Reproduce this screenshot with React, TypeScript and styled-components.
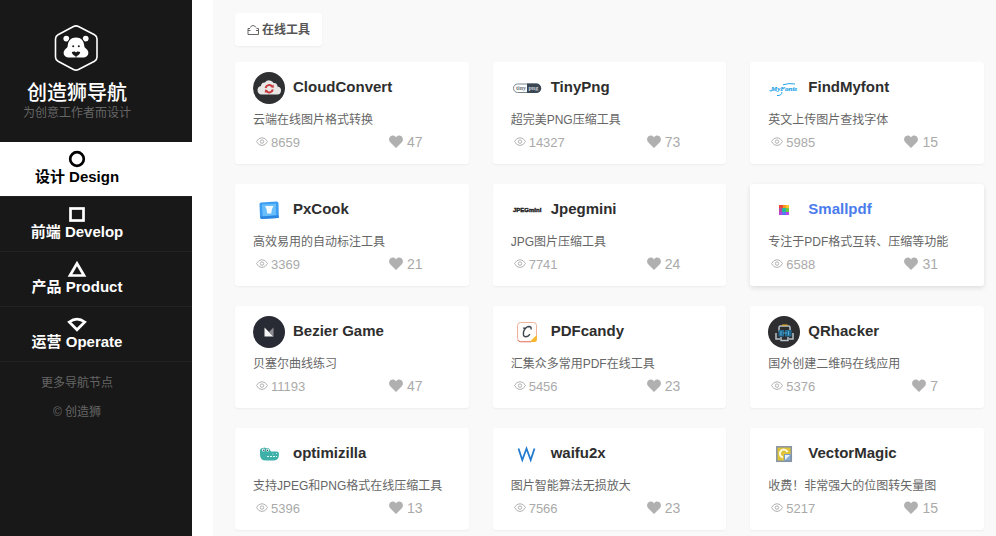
import React from "react";
import styled, { createGlobalStyle, css } from "styled-components";

const GlobalStyle = createGlobalStyle`
  * { box-sizing: border-box; }
  body {
    margin: 0;
    background: #fff;
    font-family: "Liberation Sans", Arial, "Noto Sans CJK SC", sans-serif;
    font-size: 12px;
    color: #666;
  }
  a { color: inherit; text-decoration: none; }
  svg { display: block; flex: none; }
`;

const Page = styled.div`
  display: flex;
  gap: 21px;
  min-height: 100vh;
`;

const Sidebar = styled.aside`
  flex: none;
  width: 192px;
  background: #181818;
  color: #fff;
`;

const Brand = styled.header`
  display: flex;
  flex-direction: column;
  align-items: center;
  height: 142px;
  padding: 24px 38px 0 0;
`;

const BrandName = styled.h1`
  margin: 9px 0 0;
  font-size: 20px;
  line-height: 24px;
  font-weight: 500;
  white-space: nowrap;
`;

const Slogan = styled.p`
  margin: 0;
  line-height: 16px;
  color: #666;
  white-space: nowrap;
`;

const NavLink = styled.a<{ $active?: boolean }>`
  display: flex;
  flex-direction: column;
  align-items: center;
  height: 55px;
  padding: 8px 38px 0 0;
  border-bottom: 1px solid #222;
  font-size: 15px;
  font-weight: 700;
  line-height: 18px;
  white-space: nowrap;
  ${({ $active }) => $active && css`
    background: #fff;
    color: #000;
  `}
`;

const SideLinks = styled.div`
  display: flex;
  flex-direction: column;
  align-items: center;
  gap: 9px;
  padding: 11px 38px 0 0;
  line-height: 20px;
  color: #666;
`;

const Main = styled.main`
  flex: 1;
  min-width: 0;
  padding: 13px 12px 6px 22px;
  background: #f9f9f9;
`;

const SectionTag = styled.h2`
  display: inline-flex;
  align-items: center;
  gap: 3px;
  height: 33px;
  margin: 0 0 16px;
  padding: 0 12px;
  border-radius: 3px;
  background: #fff;
  box-shadow: 0 1px 2px rgba(0, 0, 0, 0.05);
  font-size: 12px;
  line-height: 20px;
  color: #555;
`;

const Grid = styled.div`
  display: grid;
  grid-template-columns: repeat(3, minmax(0, 1fr));
  gap: 20px 24px;
`;

const Title = styled.a<{ $highlight?: boolean }>`
  display: flex;
  align-items: center;
  gap: 8px;
  height: 32px;
  font-size: 15px;
  font-weight: 700;
  line-height: 18px;
  white-space: nowrap;
  color: ${({ $highlight }) => ($highlight ? "#4a7cec" : "#2e2e2e")};
`;

const TitleText = styled.span`
  padding-bottom: 2px;
`;

const Card = styled.article<{ $raised?: boolean }>`
  padding: 10px 18px 12px;
  border-radius: 3px;
  background: #fff;
  box-shadow: ${({ $raised }) =>
    $raised ? "0 2px 5px rgba(0, 0, 0, 0.11)" : "0 1px 2px rgba(0, 0, 0, 0.05)"};
`;

const Description = styled.p`
  margin: 6px 0 2px;
  line-height: 20px;
  white-space: nowrap;
  overflow: hidden;
  text-overflow: ellipsis;
`;

const Stats = styled.div`
  display: flex;
  justify-content: space-between;
  height: 20px;
  padding: 0 28px 0 3px;
  color: #aaa;
`;

const Views = styled.span`
  display: flex;
  align-items: center;
  gap: 3px;
  font-size: 13px;
`;

const LikeButton = styled.button`
  display: flex;
  align-items: center;
  gap: 4px;
  padding: 0;
  border: 0;
  background: none;
  font: inherit;
  font-size: 14px;
  line-height: 20px;
  color: #aaa;
  cursor: pointer;
`;

const BearLogo = () => (
  <svg width="46" height="48" viewBox="0 0 46 48" aria-hidden="true">
    <path d="M19.500 2.500Q22 1.200 24.500 2.500L40.500 10.800Q43 12.200 43 15V33Q43 35.800 40.500 37.200L24.500 45.500Q22 46.800 19.500 45.500L4 37.200Q1.500 35.800 1.500 33V15Q1.500 12.200 4 10.800Z" fill="none" stroke="#fff" strokeWidth="1.600" />
    <circle cx="12.300" cy="14.600" r="2.900" fill="#fff" />
    <circle cx="31.700" cy="14.600" r="2.900" fill="#fff" />
    <path d="M22 13.500c-5 0-8 3.300-8.300 8.500-.2 1.500-1 2-2.200 3-3.500 3-1.800 8.500 3 8.500h15c4.800 0 6.500-5.500 3-8.500-1.200-1-2-1.500-2.200-3-.3-5.200-3.300-8.500-8.300-8.500Z" fill="#fff" stroke="#181818" strokeWidth="2" paintOrder="stroke" />
    <circle cx="19.200" cy="22.300" r="1" fill="#181818" />
    <circle cx="24.800" cy="22.300" r="1" fill="#181818" />
    <path d="M17.800 28q2-.8 3-.5L22 28.600l1.200-1.100q1-.3 3 .5-.5 3.200-3.700 4v1.500h-1V32q-3.200-.8-3.700-4Z" fill="#181818" />
  </svg>
);

const navShapes = {
  circle: <circle cx="10" cy="9" r="6.800" />,
  square: <rect x="3.500" y="3.500" width="13" height="12" />,
  triangle: <path d="M10 3.500 17 15.500H3Z" />,
  fan: <path d="M2.200 7Q10 1.200 17.800 7L10 14.800Z" />,
};

const NavIcon = ({ shape }: { shape: keyof typeof navShapes }) => (
  <svg width="20" height="18" viewBox="0 0 20 18" fill="none" stroke="currentColor" strokeWidth="2.700" aria-hidden="true">
    {navShapes[shape]}
  </svg>
);

const TrayIcon = () => (
  <svg width="12" height="12" viewBox="0 0 12 12" fill="none" stroke="#666" aria-hidden="true">
    <path d="M3 4.500H1V10.500H11.500V4.500H9.500M3.500 3.500Q4 1.500 6 1.500T9 3.500M1 6.500H3.500M9 6.500H11.500" />
  </svg>
);

const EyeIcon = () => (
  <svg width="12" height="10" viewBox="0 0 12 10" fill="none" stroke="#b2b2b2" aria-hidden="true">
    <path d="M.5 4.500Q2.500.7 6 .7T11.500 4.500Q9.500 8.500 6 8.500T.5 4.500Z" />
    <circle cx="6" cy="4.600" r="1.700" />
  </svg>
);

const HeartIcon = () => (
  <svg width="14" height="14" viewBox="0 0 14 14" fill="#b0b0b0" aria-hidden="true">
    <path d="M7 13 1.200 7.300C-.5 5.500-.2 2.500 1.600 1.200 3.500 0 5.800.5 7 2.400 8.200.5 10.500 0 12.400 1.200 14.200 2.500 14.500 5.500 12.800 7.300Z" />
  </svg>
);

const logos: Record<string, React.ReactNode> = {
  CloudConvert: (
    <>
      <circle cx="16" cy="16" r="16" fill="#2f3032" />
      <path d="M8.500 22.500a4.300 4.300 0 0 1-.5-8.500 3.500 3.500 0 0 1 4-3.500 5 5 0 0 1 8.500.5 3.700 3.700 0 0 1 4 3.500 4 4 0 0 1-1 8Z" fill="#e9e7e6" />
      <g fill="none" stroke="#c5383d" strokeWidth="2">
        <path d="M12.600 16a3.700 3.700 0 0 1 6.500-1.600M19.800 17.500a3.700 3.700 0 0 1-6.500 1.600" />
      </g>
      <path d="m20.800 12.500-.2 3.500-3.200-1ZM11.800 21l.2-3.500 3 1Z" fill="#c5383d" />
    </>
  ),
  TinyPng: (
    <>
      <rect x="2.500" y="12" width="27" height="8.500" rx="4.200" fill="#fff" stroke="#7b8791" />
      <path d="M16 11.500h9.500a4.700 4.700 0 0 1 0 9.500H16Z" fill="#3a4754" />
      <text x="5" y="18" fontSize="6" fontFamily="Liberation Serif" fill="#67727d">tiny</text>
      <text x="17.500" y="18" fontSize="6" fontFamily="Liberation Serif" fill="#cbd2d8">png</text>
    </>
  ),
  FindMyfont: (
    <>
      <text x="3" y="19" fontSize="7" fontStyle="italic" fontWeight="700" fontFamily="Liberation Serif" fill="#27a5e8" stroke="#27a5e8" strokeWidth=".2">MyFonts</text>
      <path d="M1.500 18.500q1.500 1.500 3-.5M14 20q-.5 4-5 3.500M15 12.800q6-2 12-.8" fill="none" stroke="#27a5e8" />
    </>
  ),
  PxCook: (
    <>
      <path d="M8 8.500 23.500 7.500Q25.500 7.500 25.500 9.500L25.800 22.500Q26 24 24.300 24L9 25Q7 25 7 23L6.500 10Q6.500 8.600 8 8.500Z" fill="#3c9df2" />
      <path d="M9 10.500 23 9.800V21L9.500 22.500Z" fill="#68bdfb" />
      <path d="M12 12h8.500l-1.500 3-.8 4.500h-4l-.7-4.500Z" fill="#f3faff" />
      <path d="M7 22.500 25.700 21.500V24L8 25Z" fill="#2c85df" />
    </>
  ),
  Jpegmini: (
    <text x="2" y="18" fontSize="6" fontWeight="700" fontFamily="Liberation Sans" fill="#222" stroke="#222" strokeWidth=".4">JPEGmini</text>
  ),
  Smallpdf: (
    <>
      <path d="M11 11h4v3h-4Z" fill="#e84a35" /><path d="M15 11h3v3h-3Z" fill="#f39a21" /><path d="M18 11h3v3h-3Z" fill="#f6c62a" />
      <path d="M11 14h3v4h-3Z" fill="#b84aa4" /><path d="M14 14h4v4h-4Z" fill="#21b9a0" /><path d="M18 14h3v4h-3Z" fill="#6fcb3c" />
      <path d="M11 18h3v3h-3Z" fill="#bd42e6" /><path d="M14 18h4v3h-4Z" fill="#5b75ef" /><path d="M18 18h3v3h-3Z" fill="#bd42f1" />
    </>
  ),
  "Bezier Game": (
    <>
      <circle cx="16" cy="16" r="16" fill="#282a34" />
      <path d="M11.500 11.500 20.500 20.500h-9Z" fill="#f4f4f4" />
      <path d="M20.500 11.500v9L16 16Z" fill="#8d8e93" />
    </>
  ),
  PDFcandy: (
    <>
      <rect x="6.500" y="6.500" width="19" height="19" rx="3" fill="#fffdfb" stroke="#eeb29b" />
      <path d="M25.800 19v4.500q0 2.500-2.500 2.500H18.500Z" fill="#f8b62c" />
      <path d="M7 24q.5 1.700 2.500 1.800H20" fill="none" stroke="#e78170" />
      <path d="M20 13.500q.8-3-2.200-3-3.300.3-5 4.500-1.600 5.500 2 5.700 2.200 0 4.200-2.500M14.500 12.500q-1.700.2-2-1" fill="none" stroke="#3d4650" strokeWidth="1.400" />
    </>
  ),
  QRhacker: (
    <>
      <circle cx="16" cy="16" r="16" fill="#2e2e30" />
      <path d="M11 15.500V11.500Q11 10 12.500 10H20.500q1.500 0 1.500 1.500V15.500M8 17v6h4M25 17v6h-4M13 21v3.500h7V21" fill="none" stroke="#b8c1c7" strokeWidth="1.500" />
      <path d="M14 9.200h5.500" stroke="#d4a63d" strokeWidth="1.500" />
      <path d="M10.500 14h5.500v6.500h-5.500ZM17 14h6.500v6.500H17Z" fill="#236b92" />
      <path d="M13 15v4.500M15 17h4M20.500 15v4.500" stroke="#55a9ca" />
    </>
  ),
  optimizilla: (
    <>
      <path d="M7 13q0-3 3-3 1.500-1 3 .3 3-1.300 4 1.700l1 1.500h6q2 0 2 2.500 0 6-5 6.500H13q-6 0-6-6Z" fill="#3eb0a8" />
      <circle cx="10.500" cy="12" r="1.500" fill="#fff" /><circle cx="14.500" cy="12" r="1.500" fill="#fff" />
      <circle cx="10.800" cy="12.200" r=".7" fill="#234" /><circle cx="14.300" cy="12.200" r=".7" fill="#234" />
      <path d="M14 18.500h10M19.500 16h.8M23 15.500h.8" stroke="#e1fffb" strokeDasharray="2 1" />
    </>
  ),
  waifu2x: (
    <path d="M7.500 10.500 11.300 22 15.500 10.500 19.700 22 23.500 10.500" fill="none" stroke="#237bd0" strokeWidth="1.800" />
  ),
  VectorMagic: (
    <>
      <rect x="8.800" y="8.800" width="14.500" height="14.500" fill="#dfc33b" stroke="#8693a3" strokeWidth="1.500" />
      <path d="M19.500 14a4 4 0 1 0-4.500 5.500" fill="none" stroke="#fff9db" strokeWidth="2" />
      <path d="M16.500 16.500h6v6h-6Z" fill="#e7f3ff" stroke="#7b9abd" />
      <path d="m17 22 5-5v5Z" fill="#8daecf" />
    </>
  ),
};

const tools = [
  { name: "CloudConvert", text: "云端在线图片格式转换", views: 8659, likes: 47 },
  { name: "TinyPng", text: "超完美PNG压缩工具", views: 14327, likes: 73 },
  { name: "FindMyfont", text: "英文上传图片查找字体", views: 5985, likes: 15 },
  { name: "PxCook", text: "高效易用的自动标注工具", views: 3369, likes: 21 },
  { name: "Jpegmini", text: "JPG图片压缩工具", views: 7741, likes: 24 },
  { name: "Smallpdf", text: "专注于PDF格式互转、压缩等功能", views: 6588, likes: 31, active: true },
  { name: "Bezier Game", text: "贝塞尔曲线练习", views: 11193, likes: 47 },
  { name: "PDFcandy", text: "汇集众多常用PDF在线工具", views: 5456, likes: 23 },
  { name: "QRhacker", text: "国外创建二维码在线应用", views: 5376, likes: 7 },
  { name: "optimizilla", text: "支持JPEG和PNG格式在线压缩工具", views: 5396, likes: 13 },
  { name: "waifu2x", text: "图片智能算法无损放大", views: 7566, likes: 23 },
  { name: "VectorMagic", text: "收费！非常强大的位图转矢量图", views: 5217, likes: 15 },
];

const navItems: { label: string; shape: keyof typeof navShapes; active?: boolean }[] = [
  { label: "设计 Design", shape: "circle", active: true },
  { label: "前端 Develop", shape: "square" },
  { label: "产品 Product", shape: "triangle" },
  { label: "运营 Operate", shape: "fan" },
];

export default function App() {
  return (
    <Page>
      <GlobalStyle />
      <Sidebar>
        <Brand>
          <BearLogo />
          <BrandName>创造狮导航</BrandName>
          <Slogan>为创意工作者而设计</Slogan>
        </Brand>
        <nav>
          {navItems.map((item) => (
            <NavLink key={item.label} href="#" $active={item.active}>
              <NavIcon shape={item.shape} />
              {item.label}
            </NavLink>
          ))}
        </nav>
        <SideLinks>
          <a href="#">更多导航节点</a>
          <a href="#">© 创造狮</a>
        </SideLinks>
      </Sidebar>
      <Main>
        <SectionTag>
          <TrayIcon />
          在线工具
        </SectionTag>
        <Grid>
          {tools.map((tool) => (
            <Card key={tool.name} $raised={tool.active}>
              <Title href="#" $highlight={tool.active}>
                <svg width="32" height="32" viewBox="0 0 32 32" aria-hidden="true">
                  {logos[tool.name]}
                </svg>
                <TitleText>{tool.name}</TitleText>
              </Title>
              <Description>{tool.text}</Description>
              <Stats>
                <Views>
                  <EyeIcon />
                  {tool.views}
                </Views>
                <LikeButton type="button">
                  <HeartIcon />
                  {tool.likes}
                </LikeButton>
              </Stats>
            </Card>
          ))}
        </Grid>
      </Main>
    </Page>
  );
}
